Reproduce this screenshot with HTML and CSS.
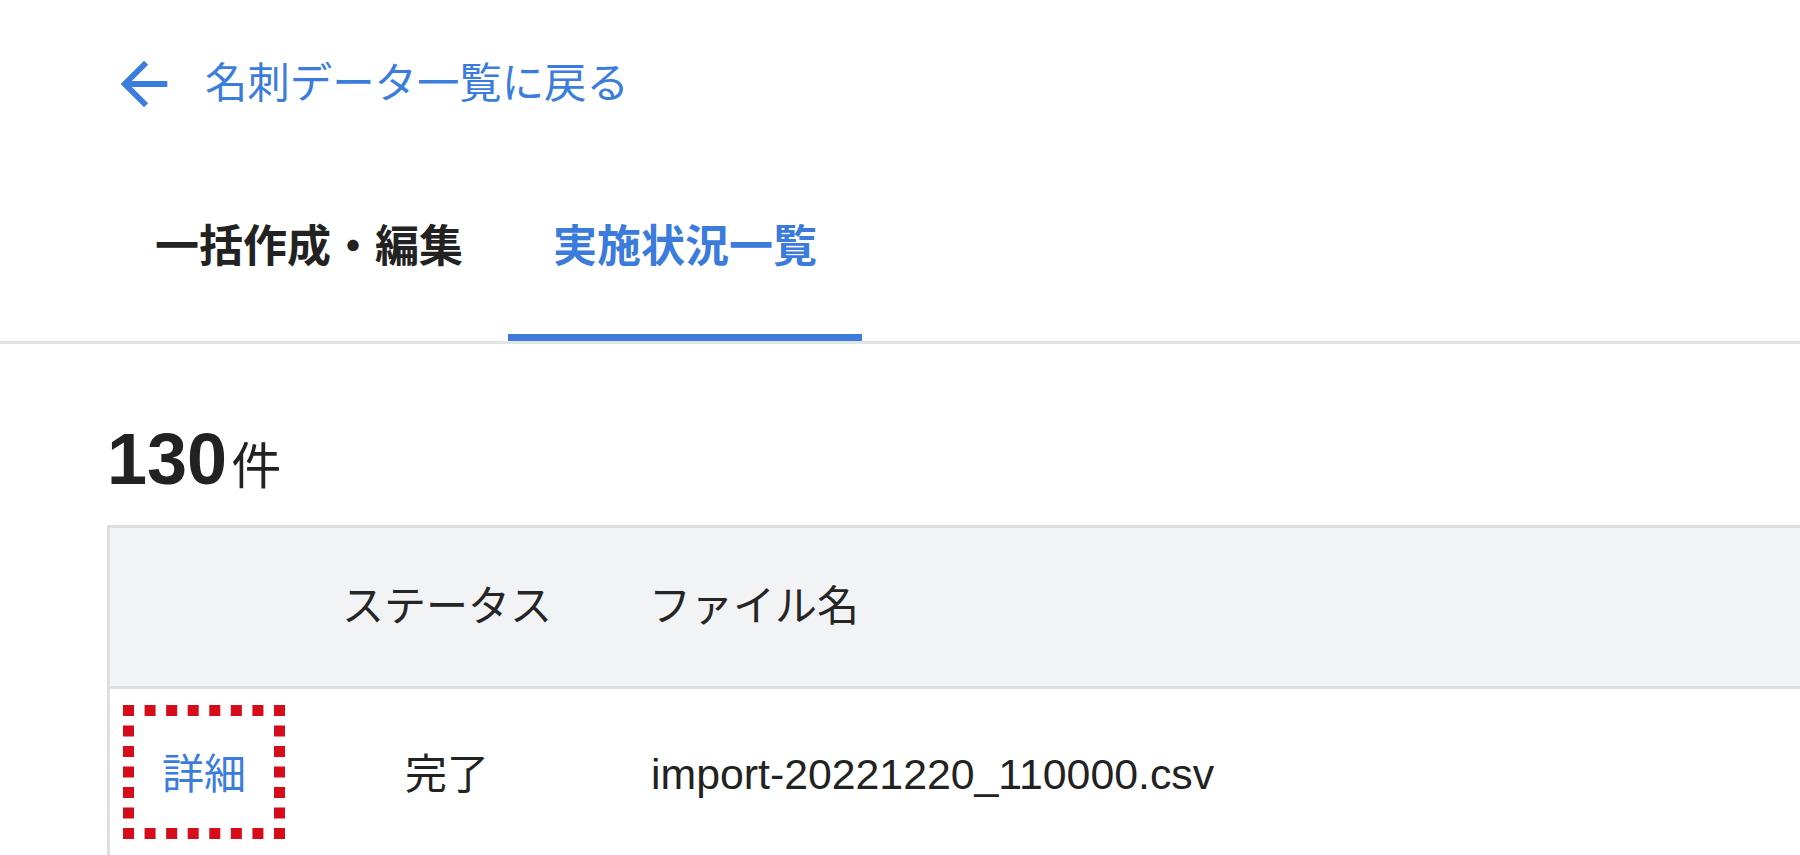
FILE: index.html
```html
<!DOCTYPE html>
<html lang="ja">
<head>
<meta charset="utf-8">
<title>実施状況一覧</title>
<link rel="stylesheet" href="styles.css">
</head>
<body>
<div class="page">
  <a class="back" href="#">
    <svg class="back-icon" viewBox="0 0 24 24" width="70" height="70" aria-hidden="true">
      <path d="M20 11H7.83l5.59-5.59L12 4l-8 8 8 8 1.41-1.41L7.83 13H20v-2z" fill="currentColor"/>
    </svg>
    <span class="back-text">名刺データ一覧に戻る</span>
  </a>

  <nav class="tabs">
    <div class="tab">一括作成・編集</div>
    <div class="tab active">実施状況一覧</div>
  </nav>

  <div class="count"><span class="num">130</span><span class="unit">件</span></div>

  <div class="table">
    <div class="row head">
      <div class="cell c1"></div>
      <div class="cell c2">ステータス</div>
      <div class="cell c3">ファイル名</div>
    </div>
    <div class="row body">
      <div class="cell c1">
        <a class="detail" href="#">詳細
          <svg class="dots" viewBox="0 0 162 134" width="162" height="134" aria-hidden="true">
            <g stroke="#d60c1a" stroke-width="11" fill="none">
              <line x1="0" y1="5.5" x2="162" y2="5.5" stroke-dasharray="11 10.57"/>
              <line x1="0" y1="128.5" x2="162" y2="128.5" stroke-dasharray="11 10.57"/>
              <line x1="5.5" y1="0" x2="5.5" y2="134" stroke-dasharray="11 9.5"/>
              <line x1="156.5" y1="0" x2="156.5" y2="134" stroke-dasharray="11 9.5"/>
            </g>
          </svg>
        </a>
      </div>
      <div class="cell c2">完了</div>
      <div class="cell c3 file">import-20221220_110000.csv</div>
    </div>
  </div>
</div>
</body>
</html>
```

FILE: styles.css
```css
html, body {
  margin: 0;
  padding: 0;
  background: #ffffff;
}

body {
  overflow: hidden;
  font-family: "Liberation Sans", "Noto Sans CJK JP", sans-serif;
  color: #222222;
}

.page {
  width: 1800px;
}

.back {
  display: flex;
  align-items: center;
  gap: 26px;
  padding: 49px 0 0 109px;
  height: 70px;
  color: #3b7ddd;
  text-decoration: none;
  font-size: 42.4px;
  line-height: 70px;
}

.back-icon {
  display: block;
  flex: none;
}

.tabs {
  display: flex;
  margin-top: 95px;
  padding-left: 110px;
  border-bottom: 3px solid #e3e3e3;
}

.tab {
  padding: 0 45px 54px;
  font-size: 44px;
  font-weight: bold;
  line-height: 66px;
  color: #222222;
  border-bottom: 7px solid transparent;
}

.tab.active {
  color: #3b7bdb;
  border-bottom-color: #3b7bdb;
}

.count {
  margin-top: 75px;
  padding-left: 107px;
  height: 80px;
  font-size: 72px;
  line-height: 80px;
  color: #222222;
}

.num {
  font-size: 72px;
  font-weight: bold;
}

.unit {
  font-size: 50px;
  margin-left: 4px;
}

.table {
  margin-top: 26px;
  margin-left: 107px;
  width: 1760px;
  border: 3px solid #dfdfdf;
  border-bottom: none;
}

.row {
  display: grid;
  grid-template-columns: 190px 294px 1fr;
  font-size: 42px;
  line-height: 1.2;
}

.row.head {
  height: 158px;
  align-items: center;
  background: #f2f3f5;
  border-bottom: 3px solid #dfdfdf;
  color: #252525;
}

.row.body {
  min-height: 220px;
  padding-top: 16px;
  align-items: start;
}

.c2 {
  text-align: center;
}

.c3 {
  padding-left: 55px;
}

.row.body .c1 {
  padding-left: 13px;
}

.row.body .c2,
.row.body .c3 {
  height: 134px;
  display: flex;
  align-items: center;
  padding-top: 6px;
  box-sizing: border-box;
}

.row.body .c2 {
  justify-content: center;
}

.row.body .file {
  padding-left: 57px;
  font-size: 42.8px;
}

.detail {
  position: relative;
  display: flex;
  align-items: center;
  justify-content: center;
  width: 162px;
  height: 134px;
  padding-top: 6px;
  box-sizing: border-box;
  color: #3b7ddd;
  text-decoration: none;
}

.dots {
  position: absolute;
  left: 0;
  top: 0;
}
```
